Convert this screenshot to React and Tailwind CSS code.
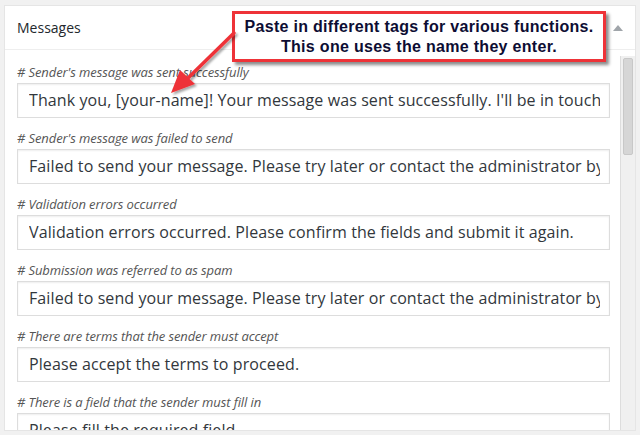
export default function App() {
  const items = [
    ["# Sender's message was sent successfully", "Thank you, [your-name]! Your message was sent successfully. I'll be in touch soon."],
    ["# Sender's message was failed to send", "Failed to send your message. Please try later or contact the administrator by another method."],
    ["# Validation errors occurred", "Validation errors occurred. Please confirm the fields and submit it again."],
    ["# Submission was referred to as spam", "Failed to send your message. Please try later or contact the administrator by another method."],
    ["# There are terms that the sender must accept", "Please accept the terms to proceed."],
    ["# There is a field that the sender must fill in", "Please fill the required field."],
  ];
  return (
    <div className="relative h-[435px] w-[640px] overflow-hidden bg-[#f1f1f1] pl-[4px] pt-[5px]" style={{ fontFamily: '"Open Sans", sans-serif' }}>
      <div className="flex h-[426px] w-[632px] flex-col border border-[#e5e5e5] bg-white">
        <div className="flex h-[44px] shrink-0 items-center justify-between border-b border-[#eeeeee] pl-[12px] pr-[12px]">
          <span className="text-[14px] text-[#23282d]">Messages</span>
          <svg width="10" height="6" viewBox="0 0 10 6"><polygon points="5,0 10,6 0,6" fill="#a0a5aa" /></svg>
        </div>
        <div className="flex min-h-0 flex-1 pt-[6px]">
          <div className="min-h-0 flex-1 overflow-hidden pl-[12px] pr-[12px] pt-[7px]">
            {items.map(([label, value], i) => (
              <div key={i} className="mb-[11px]">
                <div className="h-[18px] whitespace-nowrap text-[13px] leading-[18px] italic tracking-[-0.1px] text-[#555]">{label}</div>
                <div className="mt-[2px] h-[35px] w-[593px] border border-[#dddddd] bg-white pl-[11px] pr-[9px] shadow-[inset_0_1px_2px_rgba(0,0,0,0.07)]">
                  <div className="overflow-hidden whitespace-nowrap text-[16px] leading-[33px] tracking-[0.1px] text-[#32373c]">{value}</div>
                </div>
              </div>
            ))}
          </div>
          <div className="relative w-[15px] shrink-0 border-l border-[#dddddd] bg-[#f0f0f0]">
            <div className="absolute left-[2px] top-[2px] h-[97px] w-[10px] rounded-[2px] border border-[#c8c8c8] bg-[#d6d6d6]" />
          </div>
        </div>
      </div>

      <div className="absolute left-[232px] top-[11px] flex h-[51px] w-[374px] flex-col items-center justify-center border-[3px] border-[#ee3338] bg-white shadow-[3px_3px_3px_rgba(0,0,0,0.45)]" style={{ fontFamily: '"Liberation Sans", Arial, sans-serif' }}>
        <div className="whitespace-nowrap text-[16px] font-bold leading-[20px] tracking-[0.3px] text-[#0d0d33]">Paste in different tags for various functions.</div>
        <div className="whitespace-nowrap text-[16px] font-bold leading-[20px] tracking-[0.3px] text-[#0d0d33]">This one uses the name they enter.</div>
      </div>

      <svg className="pointer-events-none absolute left-0 top-0" width="640" height="435">
        <defs>
          <filter id="sh" x="-20%" y="-20%" width="140%" height="140%">
            <feDropShadow dx="2" dy="2" stdDeviation="1.2" floodColor="#000" floodOpacity="0.35" />
          </filter>
        </defs>
        <g filter="url(#sh)">
          <line x1="234" y1="33" x2="186" y2="80" stroke="#ee3338" strokeWidth="3.5" strokeLinecap="round" />
          <polygon points="171,93 180,70 195,84" fill="#ee3338" />
        </g>
      </svg>
    </div>
  );
}
